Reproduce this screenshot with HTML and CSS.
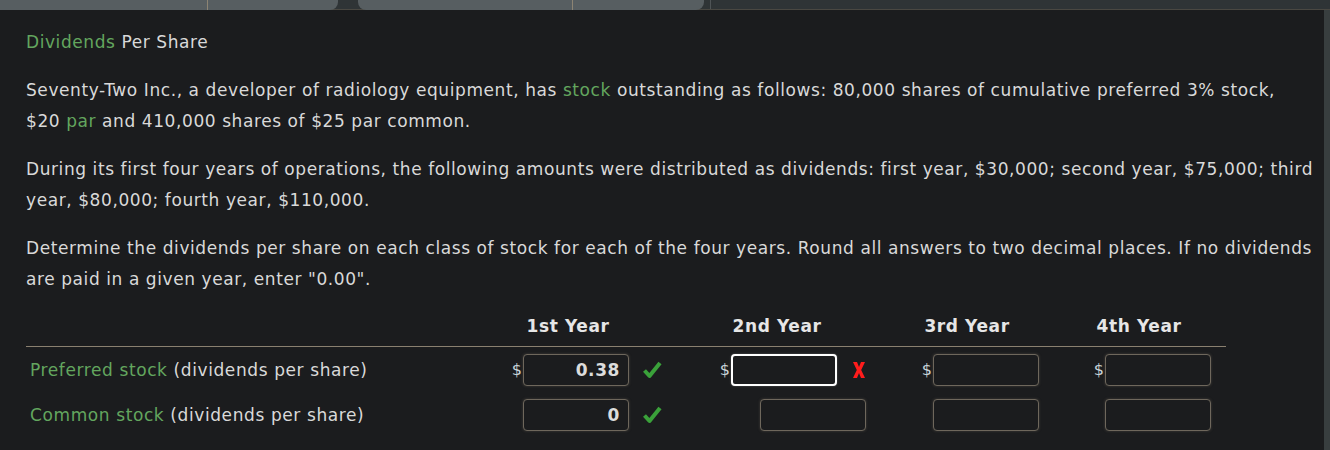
FILE: index.html
```html
<!DOCTYPE html>
<html>
<head>
<meta charset="utf-8">
<link rel="stylesheet" href="styles.css">
</head>
<body>
<div class="topbar">
  <div class="tab tab-a"><span class="seg seg-a1"></span><span class="seg seg-a2"></span></div>
  <div class="tab tab-b"><span class="seg seg-b1"></span><span class="seg seg-b2"></span></div>
  <div class="gap-line2"></div>
</div>
<div class="page">
  <main class="content">
    <h1 class="title"><span class="term">Dividends</span> Per Share</h1>
    <p class="intro">Seventy-Two Inc., a developer of radiology equipment, has <span class="term">stock</span> outstanding as follows: 80,000 shares of cumulative preferred 3% stock, $20 <span class="term">par</span> and 410,000 shares of $25 par common.</p>
    <p>During its first four years of operations, the following amounts were distributed as dividends: first year, $30,000; second year, $75,000; third year, $80,000; fourth year, $110,000.</p>
    <p>Determine the dividends per share on each class of stock for each of the four years. Round all answers to two decimal places. If no dividends are paid in a given year, enter "0.00".</p>

    <div class="grid">
      <div class="hd"></div>
      <div class="hd">1st Year</div>
      <div class="hd">2nd Year</div>
      <div class="hd">3rd Year</div>
      <div class="hd">4th Year</div>

      <div class="label"><span><span class="term">Preferred stock</span> (dividends per share)</span></div>
      <div class="cell c1"><span class="dol">$</span><span class="box">0.38</span><svg class="mark" width="20" height="20" viewBox="0 0 20 20"><path d="M2.5 10.5 L7.5 16 L18 3" fill="none" stroke="#3aa13a" stroke-width="4" stroke-linejoin="round"/></svg></div>
      <div class="cell c2"><span class="dol">$</span><span class="box focus"></span><svg class="xmark" width="14" height="18" viewBox="0 0 14 18"><path d="M1 1 H5 L7 6 L9 1 H13 L9.2 9 L13 17 H9 L7 12 L5 17 H1 L4.8 9 Z" fill="#ff1c1c"/></svg></div>
      <div class="cell c3"><span class="dol">$</span><span class="box"></span></div>
      <div class="cell c4"><span class="dol">$</span><span class="box"></span></div>

      <div class="label"><span><span class="term">Common stock</span> (dividends per share)</span></div>
      <div class="cell c1"><span class="box">0</span><svg class="mark" width="20" height="20" viewBox="0 0 20 20"><path d="M2.5 10.5 L7.5 16 L18 3" fill="none" stroke="#3aa13a" stroke-width="4" stroke-linejoin="round"/></svg></div>
      <div class="cell c2"><span class="box"></span></div>
      <div class="cell c3"><span class="box"></span></div>
      <div class="cell c4"><span class="box"></span></div>
    </div>
  </main>
  <div class="rail"></div>
</div>
</body>
</html>
```
FILE: styles.css
```css
html, body {
  margin: 0;
  padding: 0;
  background: #1b1c1e;
  font-family: "DejaVu Sans", Verdana, sans-serif;
  color: #d9d9d9;
  overflow: hidden;
}

.topbar {
  display: flex;
  height: 10px;
  background: #2f3436;
  border-bottom: 1px solid #4a4842;
  box-sizing: border-box;
}
.tab {
  display: flex;
  height: 10px;
  background: #575e61;
  border-radius: 0 0 8px 8px;
}
.tab-a { width: 338px; border-bottom-left-radius: 0; }
.tab-b { width: 346px; margin-left: 20px; }
.seg { display: block; height: 100%; }
.seg-a1 { width: 207px; border-right: 1px solid #8d8473; }
.seg-b1 { width: 214px; border-right: 1px solid #8d8473; }
.gap-line2 {
  width: 1px;
  margin-left: 6px;
  background: #4f5456;
}

.page {
  display: flex;
  height: 440px;
}
.content {
  flex: 1;
  padding: 17px 0 0 26px;
}
.rail {
  width: 6px;
  background: #383e3f;
}

.title {
  margin: 0;
  font-size: 17px;
  font-weight: normal;
  line-height: 31px;
  letter-spacing: 0.58px;
}
p {
  margin: 17px 0 0;
  font-size: 17px;
  line-height: 31px;
  letter-spacing: 0.58px;
}
p.intro { max-width: 1270px; }
.term { color: #63a65e; }

.grid {
  display: grid;
  grid-template-columns: 438px 208px 210px 170px 174px;
  margin-top: 19px;
  font-size: 17px;
  letter-spacing: 0.6px;
}
.hd {
  text-align: center;
  font-weight: bold;
  line-height: 24px;
  padding-bottom: 8px;
  border-bottom: 1px solid #8a8070;
  color: #e6e6e6;
}
.label {
  display: flex;
  align-items: center;
  padding-left: 4px;
  height: 45px;
}
.cell {
  display: flex;
  align-items: center;
  justify-content: flex-end;
  height: 45px;
}
.c1 { padding-right: 10px; }
.c2 { padding-right: 16px; }
.c3 { padding-right: 13px; }
.c4 { padding-right: 15px; }

.dol {
  color: #c9d3d8;
  font-size: 16px;
  letter-spacing: 0;
  margin-right: 1px;
}
.box {
  box-sizing: border-box;
  width: 106px;
  height: 32px;
  border: 1px solid #6e675c;
  border-radius: 4px;
  box-shadow: 0 0 3px rgba(140, 130, 110, 0.35);
  background: #1b1c1e;
  text-align: right;
  padding-right: 8px;
  line-height: 30px;
  font-weight: bold;
  color: #dcdcdc;
}
.box.focus {
  border: 2px solid #ffffff;
  box-shadow: 0 0 2px rgba(255,255,255,0.3);
}
.mark { margin-left: 13px; }
.xmark { margin-left: 15px; }
```
